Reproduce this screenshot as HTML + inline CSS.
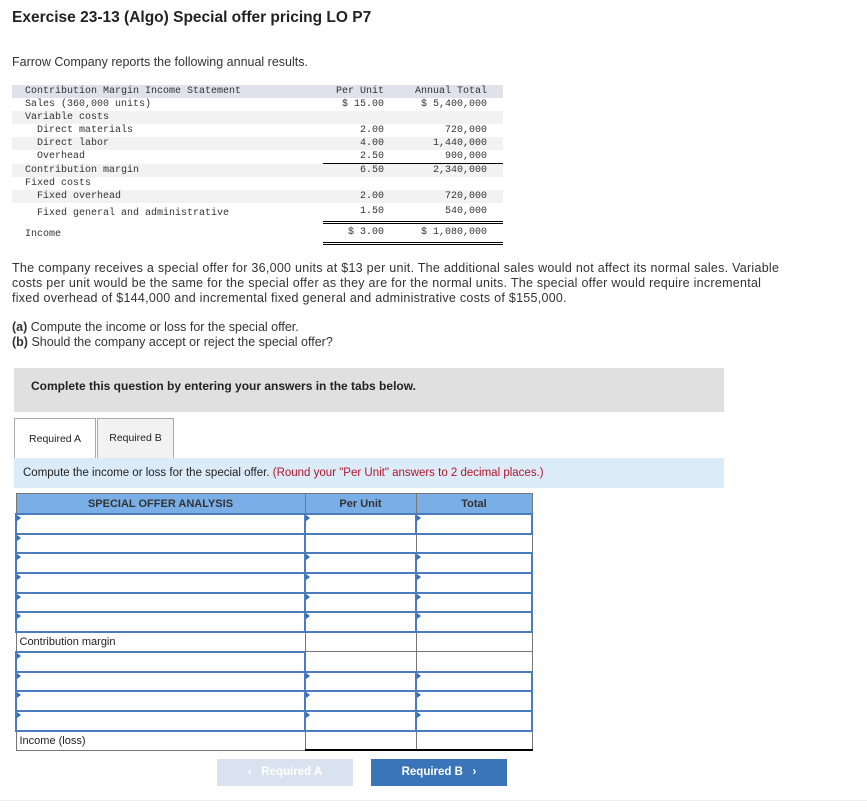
<!DOCTYPE html>
<html><head><meta charset="utf-8"><style>
body{margin:0;width:867px;height:812px;background:#fff;font-family:"Liberation Sans",Arial,sans-serif;color:#222;position:relative;overflow:hidden}
.a{position:absolute}
h1{position:absolute;left:12px;top:9px;margin:0;font-size:15.5px;font-weight:bold;color:#222}
.mono{font-family:"Liberation Mono",monospace;font-size:10px;color:#333}
.st div{position:absolute;height:13px;line-height:13px;white-space:pre}
.r{text-align:right}
.p{font-size:12.5px;line-height:15px;color:#333}
table.g{position:absolute;left:15px;top:493px;border-collapse:collapse;width:518px}
table.g td{height:17.7px;border:1px solid #777;padding:0;font-size:11px;position:relative}
table.g tr.h td{background:#7aaee6;text-align:center;font-weight:bold;color:#333;height:19px}
td.i{border:2px solid #4a7cbf!important}
td.i::before{content:"";position:absolute;left:0;top:0;border-left:4px solid #2f6fc0;border-top:3px solid transparent;border-bottom:3px solid transparent}
</style></head><body>
<h1>Exercise 23-13 (Algo) Special offer pricing LO P7</h1>
<div class="a p" style="left:12px;top:55px">Farrow Company reports the following annual results.</div>
<div class="a mono st" style="left:0;top:0">
<div style="left:12px;top:85px;width:491px;background:#dfe2ea"></div>
<div style="left:12px;top:111px;width:491px;background:#f2f2f2"></div>
<div style="left:12px;top:137px;width:491px;background:#f2f2f2"></div>
<div style="left:12px;top:164px;width:491px;background:#f2f2f2"></div>
<div style="left:12px;top:190px;width:491px;background:#f2f2f2"></div>
<div style="left:25px;top:85px">Contribution Margin Income Statement</div>
<div style="left:25px;top:98px">Sales (360,000 units)</div>
<div style="left:25px;top:111px">Variable costs</div>
<div style="left:37px;top:124px">Direct materials</div>
<div style="left:37px;top:137px">Direct labor</div>
<div style="left:37px;top:150px">Overhead</div>
<div style="left:25px;top:164px">Contribution margin</div>
<div style="left:25px;top:177px">Fixed costs</div>
<div style="left:37px;top:190px">Fixed overhead</div>
<div style="left:37px;top:207px">Fixed general and administrative</div>
<div style="left:25px;top:228px">Income</div>
<div class="r" style="left:320px;width:64px;top:85px">Per Unit</div>
<div class="r" style="left:320px;width:64px;top:98px">$ 15.00</div>
<div class="r" style="left:320px;width:64px;top:124px">2.00</div>
<div class="r" style="left:320px;width:64px;top:137px">4.00</div>
<div class="r" style="left:320px;width:64px;top:150px">2.50</div>
<div class="r" style="left:320px;width:64px;top:164px">6.50</div>
<div class="r" style="left:320px;width:64px;top:190px">2.00</div>
<div class="r" style="left:320px;width:64px;top:205px">1.50</div>
<div class="r" style="left:320px;width:64px;top:226px">$ 3.00</div>
<div class="r" style="left:400px;width:87px;top:85px">Annual Total</div>
<div class="r" style="left:400px;width:87px;top:98px">$ 5,400,000</div>
<div class="r" style="left:400px;width:87px;top:124px">720,000</div>
<div class="r" style="left:400px;width:87px;top:137px">1,440,000</div>
<div class="r" style="left:400px;width:87px;top:150px">900,000</div>
<div class="r" style="left:400px;width:87px;top:164px">2,340,000</div>
<div class="r" style="left:400px;width:87px;top:190px">720,000</div>
<div class="r" style="left:400px;width:87px;top:205px">540,000</div>
<div class="r" style="left:400px;width:87px;top:226px">$ 1,080,000</div>
<div style="left:323px;top:163px;width:180px;height:0;border-top:1px solid #000"></div>
<div style="left:323px;top:221px;width:180px;height:1px;border-top:1px solid #000;border-bottom:1px solid #000"></div>
<div style="left:323px;top:242px;width:180px;height:1px;border-top:1px solid #000;border-bottom:1px solid #000"></div>
</div>
<div class="a p" style="left:12px;top:261px;width:820px;white-space:nowrap;letter-spacing:0.27px">The company receives a special offer for 36,000 units at $13 per unit. The additional sales would not affect its normal sales. Variable<br>costs per unit would be the same for the special offer as they are for the normal units. The special offer would require incremental<br>fixed overhead of $144,000 and incremental fixed general and administrative costs of $155,000.</div>
<div class="a p" style="left:12px;top:320px"><b>(a)</b> Compute the income or loss for the special offer.<br><b>(b)</b> Should the company accept or reject the special offer?</div>
<div class="a" style="left:14px;top:368px;width:710px;height:44px;background:#e0e0e0"></div>
<div class="a" style="left:31px;top:379px;font-size:12px;font-weight:bold;color:#222">Complete this question by entering your answers in the tabs below.</div>
<div class="a" style="left:14px;top:418px;width:80px;height:40px;border:1px solid #aaa;border-bottom:none;background:#fff;font-size:10.5px;line-height:40px;text-align:center">Required A</div>
<div class="a" style="left:97px;top:418px;width:75px;height:39px;border:1px solid #aaa;background:#f2f2f2;font-size:10.5px;line-height:39px;text-align:center">Required B</div>
<div class="a" style="left:14px;top:458px;width:710px;height:30px;background:#dcebf8;font-size:11.5px;line-height:30px;padding-left:9px;box-sizing:border-box">Compute the income or loss for the special offer. <span style="color:#b0162a">(Round your "Per Unit" answers to 2 decimal places.)</span></div>
<table class="g">
<tr class="h"><td style="width:288px">SPECIAL OFFER ANALYSIS</td><td style="width:110px">Per Unit</td><td>Total</td></tr>
<tr><td class="i"></td><td class="i"></td><td class="i"></td></tr>
<tr><td class="i"></td><td></td><td></td></tr>
<tr><td class="i"></td><td class="i"></td><td class="i"></td></tr>
<tr><td class="i"></td><td class="i"></td><td class="i"></td></tr>
<tr><td class="i"></td><td class="i"></td><td class="i"></td></tr>
<tr><td class="i"></td><td class="i"></td><td class="i"></td></tr>
<tr><td style="padding-left:3px">Contribution margin</td><td style="border-top:1px solid #000"></td><td style="border-top:1px solid #000"></td></tr>
<tr><td class="i"></td><td></td><td></td></tr>
<tr><td class="i"></td><td class="i"></td><td class="i"></td></tr>
<tr><td class="i"></td><td class="i"></td><td class="i"></td></tr>
<tr><td class="i"></td><td class="i"></td><td class="i"></td></tr>
<tr><td style="padding-left:3px">Income (loss)</td><td style="border-bottom:2px solid #000"></td><td style="border-bottom:2px solid #000"></td></tr>
</table>
<div class="a" style="left:217px;top:759px;width:136px;height:27px;background:#d9e3f0;color:#fff;font-size:11.5px;font-weight:bold;line-height:27px;text-align:center">&lsaquo;&nbsp;&nbsp; Required A</div>
<div class="a" style="left:371px;top:759px;width:136px;height:27px;background:#3a75b9;color:#fff;font-size:11.5px;font-weight:bold;line-height:27px;text-align:center">Required B &nbsp;&nbsp;&rsaquo;</div>
<div class="a" style="left:0;top:800px;width:867px;height:1px;background:#eee"></div>
</body></html>
